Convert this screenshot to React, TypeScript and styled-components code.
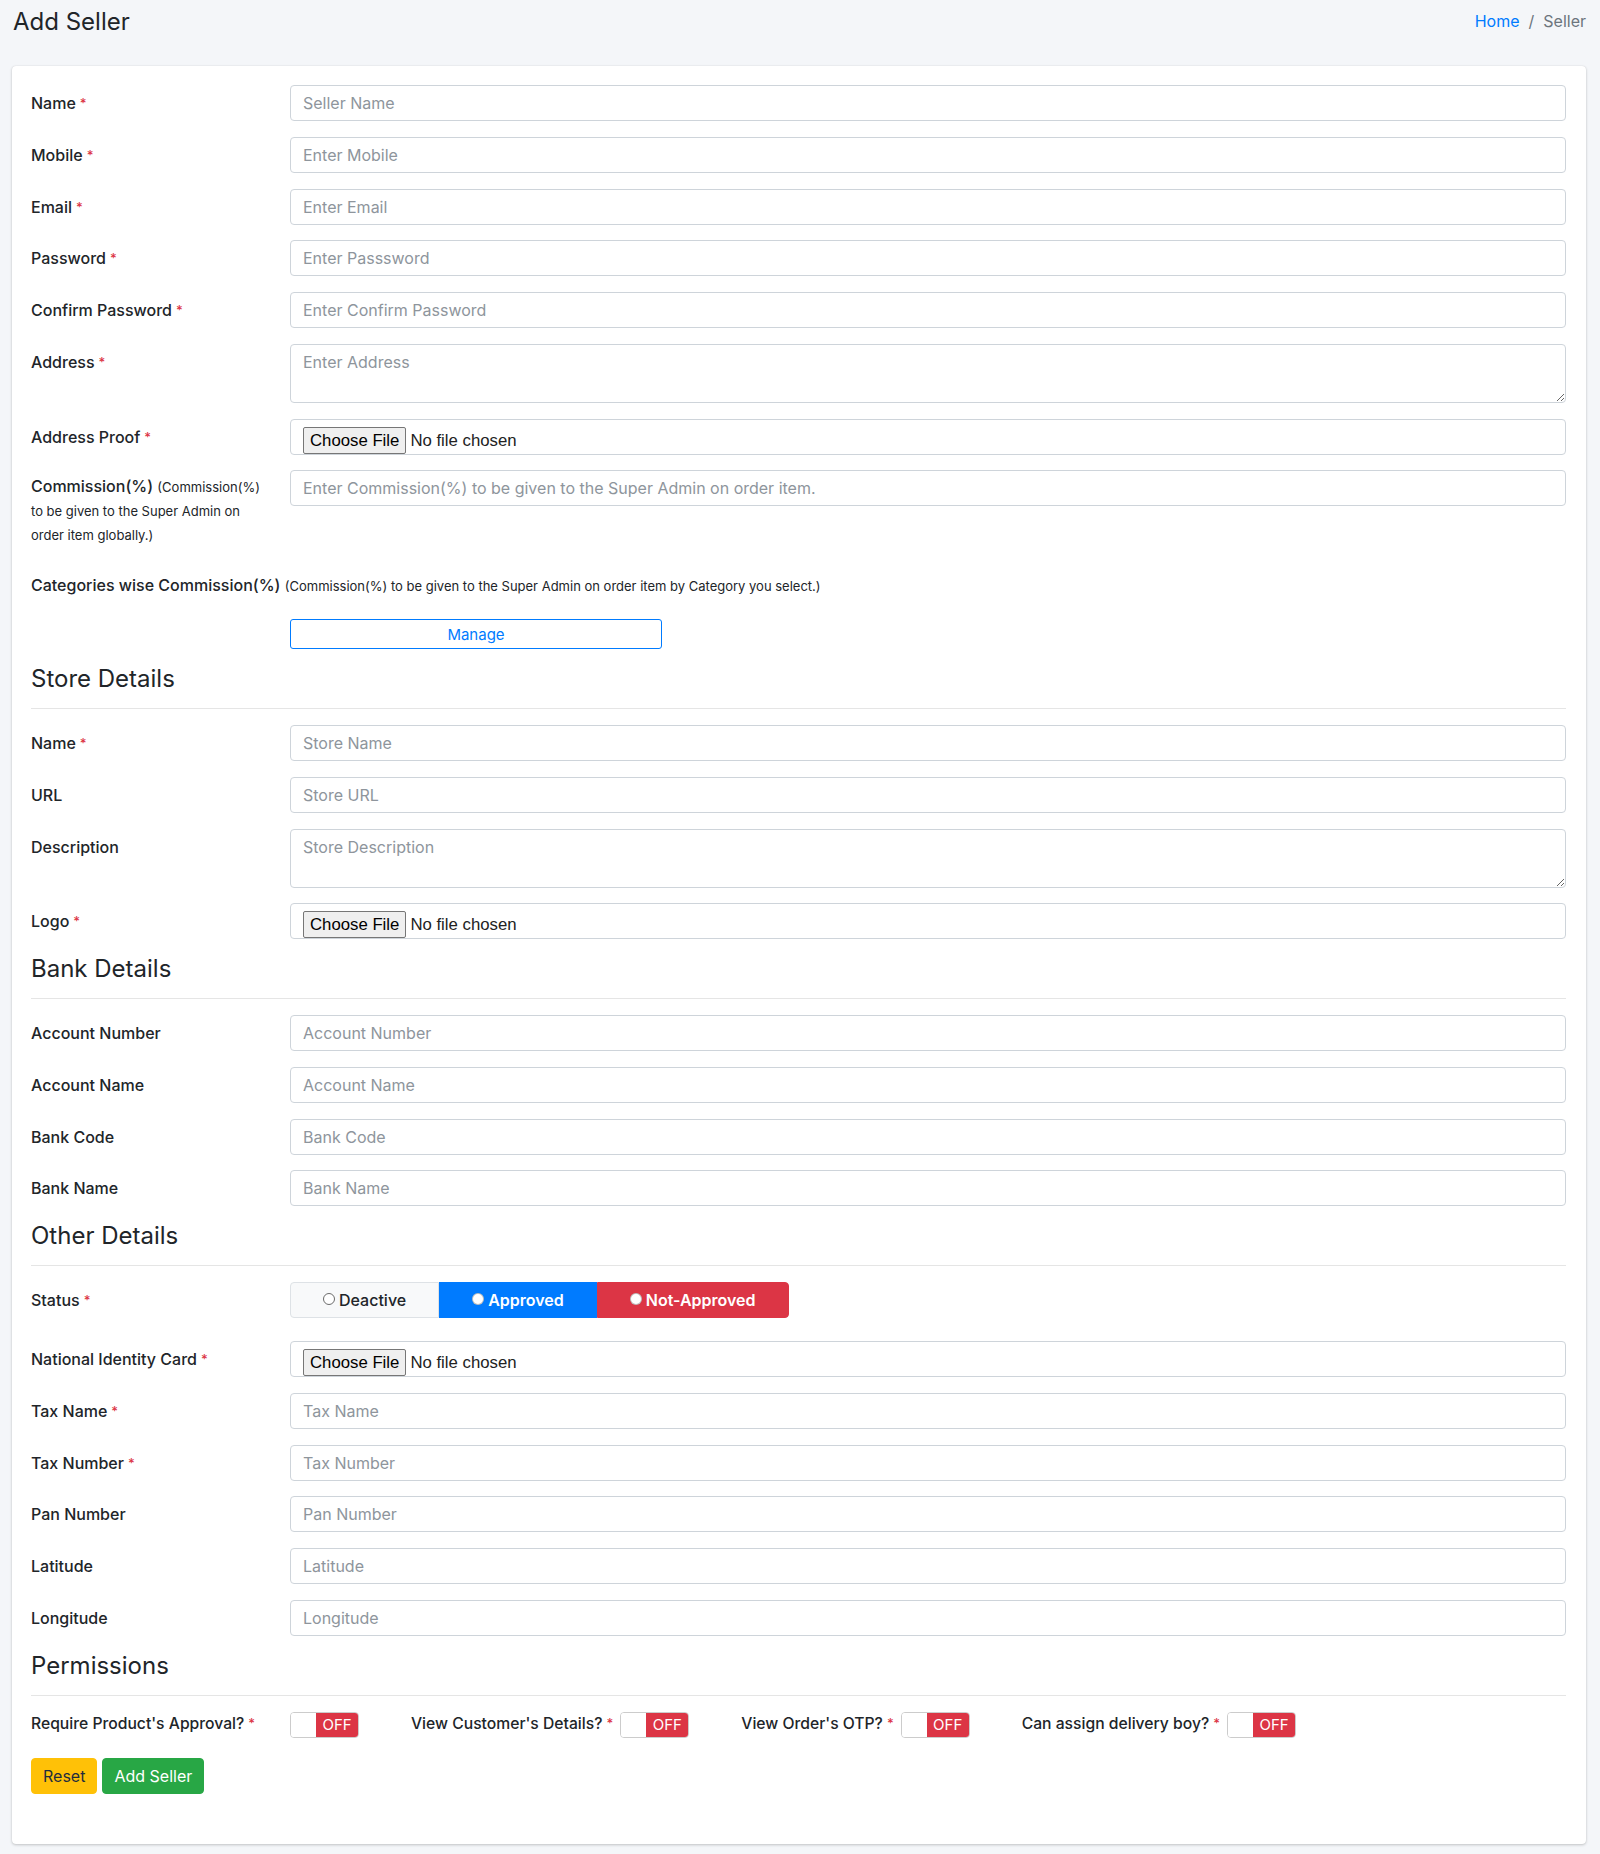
import React from 'react';
import styled, { createGlobalStyle } from 'styled-components';

const GlobalStyle = createGlobalStyle`
  * { box-sizing: border-box; }
  html, body { margin: 0; background: #f4f6f9; }
  body {
    font-family: Inter, "Noto Sans", sans-serif;
    color: #212529;
    font-size: 16px;
  }
`;

const Page = styled.div`
  padding: 0 14px 11px 12px;
`;

const Header = styled.header`
  display: flex;
  justify-content: space-between;
  align-items: center;
  height: 42px;
  margin-bottom: 24px;
`;

const Title = styled.h1`
  margin: 0;
  padding-left: 1px;
  font-size: 24px;
  font-weight: 400;
  color: #212529;
`;

const Breadcrumb = styled.nav`
  display: flex;
  gap: 9px;
  font-size: 16px;
  color: #6c757d;
`;

const Crumb = styled.a`
  color: #007bff;
  text-decoration: none;
`;

const Card = styled.div`
  background: #fff;
  border-radius: 4px;
  box-shadow: 0 0 1px rgba(0, 0, 0, 0.125), 0 1px 3px rgba(0, 0, 0, 0.2);
  padding: 19px 20px 20px 19px;
`;

const FormRow = styled.div<{ $mb?: number }>`
  display: grid;
  grid-template-columns: 259px 1fr;
  margin-bottom: ${p => p.$mb ?? 15.75}px;
`;

const Label = styled.label`
  font-size: 16px;
  font-weight: 500;
  line-height: 24px;
  padding-top: 6px;
  white-space: nowrap;
`;

const Required = styled.span`
  color: #dc3545;
  font-size: 13px;
  line-height: 1;
  margin-left: 4px;
  vertical-align: 1px;
`;

const Input = styled.input`
  width: 100%;
  height: 36px;
  border: 1px solid #ced4da;
  border-radius: 4px;
  padding: 6px 12px;
  font-family: inherit;
  font-size: 16px;
  color: #495057;
  &::placeholder { color: #8e959c; }
`;

const TextArea = styled.textarea`
  width: 100%;
  height: 59px;
  border: 1px solid #ced4da;
  border-radius: 4px;
  padding: 6px 12px;
  font-family: inherit;
  font-size: 16px;
  line-height: 22px;
  resize: vertical;
  display: block;
  &::placeholder { color: #8e959c; }
`;

const FileControl = styled.div`
  height: 36px;
  border: 1px solid #ced4da;
  border-radius: 4px;
  padding: 0 12px;
  display: flex;
  align-items: flex-end;
  font-family: "Liberation Sans", Arial, sans-serif;
  font-size: 16.75px;
  overflow: hidden;
`;

const FileButton = styled.span`
  height: 27px;
  line-height: 25px;
  padding: 0 6px;
  background: #efefef;
  border: 1px solid #767676;
  border-radius: 2px;
  color: #000;
`;

const FileText = styled.span`
  line-height: 27px;
  margin-left: 4px;
  color: #222;
`;

const LabelBlock = styled.div<{ $pb?: number }>`
  font-size: 16px;
  font-weight: 500;
  line-height: 24px;
  padding: 4px 0 ${p => p.$pb ?? 0}px;
  white-space: nowrap;
`;

const Big = styled.span`
  font-size: 16px;
  font-weight: 500;
  line-height: 1;
`;

const Note = styled.span`
  font-size: 13px;
  font-weight: 400;
  line-height: 1;
`;

const CategoryRow = styled.div`
  margin-bottom: 22px;
`;

const ManageRow = styled.div`
  padding-left: 259px;
  margin-bottom: 16px;
`;

const OutlineButton = styled.button`
  display: block;
  width: 372px;
  height: 30px;
  border: 1px solid #007bff;
  border-radius: 3px;
  background: #fff;
  color: #007bff;
  font-family: inherit;
  font-size: 15px;
`;

const SectionTitle = styled.h4`
  margin: -1px 0 0;
  font-size: 24px;
  font-weight: 400;
  line-height: 29px;
`;

const Divider = styled.hr`
  border: 0;
  border-top: 1px solid rgba(0, 0, 0, 0.1);
  margin: 15px 0 16px;
`;

const StatusGroup = styled.div`
  display: flex;
  height: 36px;
`;

const StatusOption = styled.label<{ $variant: 'light' | 'primary' | 'danger' }>`
  display: flex;
  align-items: center;
  justify-content: center;
  gap: 4px;
  padding: 0 32px;
  font-size: 16px;
  font-weight: ${p => (p.$variant === 'light' ? 500 : 600)};
  border: 1px solid
    ${p => (p.$variant === 'light' ? '#dee2e6' : p.$variant === 'primary' ? '#007bff' : '#dc3545')};
  background: ${p => (p.$variant === 'light' ? '#f8f9fa' : p.$variant === 'primary' ? '#007bff' : '#dc3545')};
  color: ${p => (p.$variant === 'light' ? '#212529' : '#fff')};
  &:first-child { border-radius: 4px 0 0 4px; }
  &:last-child { border-radius: 0 4px 4px 0; }
`;

const RadioDot = styled.span<{ $checked?: boolean }>`
  width: 12px;
  height: 12px;
  border-radius: 50%;
  background: #fff;
  border: 1px solid ${p => (p.$checked ? 'rgba(0,0,0,.25)' : '#6b6b6b')};
  margin-top: -3px;
`;

const PermissionsRow = styled.div`
  display: flex;
  align-items: center;
  height: 26px;
  margin-bottom: 20px;
`;

const PermLabel = styled.span<{ $width?: number }>`
  font-size: 15.7px;
  font-weight: 500;
  line-height: 24px;
  margin-top: -2px;
  white-space: nowrap;
  width: ${p => (p.$width ? `${p.$width}px` : 'auto')};
  margin-right: ${p => (p.$width ? 0 : 7)}px;
  flex-shrink: 0;
`;

const Toggle = styled.span`
  display: flex;
  width: 69px;
  height: 26px;
  border: 1px solid #ccc;
  border-radius: 4px;
  overflow: hidden;
  margin-right: 52px;
  flex-shrink: 0;
`;

const ToggleHandle = styled.span`
  width: 25px;
  background: #fff;
`;

const ToggleOff = styled.span`
  flex: 1;
  background: #dc3545;
  color: #fff;
  font-size: 15px;
  display: flex;
  align-items: center;
  justify-content: center;
`;

const Actions = styled.div`
  display: flex;
  gap: 5px;
  margin-bottom: 30px;
`;

const ActionButton = styled.button<{ $variant: 'warning' | 'success' }>`
  height: 36px;
  padding: 0 11px;
  border: 1px solid ${p => (p.$variant === 'warning' ? '#ffc107' : '#28a745')};
  border-radius: 4px;
  background: ${p => (p.$variant === 'warning' ? '#ffc107' : '#28a745')};
  color: ${p => (p.$variant === 'warning' ? '#1f2d3d' : '#fff')};
  font-family: inherit;
  font-size: 16px;
`;

type Field = { label: string; placeholder: string; required?: boolean; kind?: 'text' | 'area' | 'file' };

const sellerFields: Field[] = [
  { label: 'Name', placeholder: 'Seller Name', required: true },
  { label: 'Mobile', placeholder: 'Enter Mobile', required: true },
  { label: 'Email', placeholder: 'Enter Email', required: true },
  { label: 'Password', placeholder: 'Enter Passsword', required: true },
  { label: 'Confirm Password', placeholder: 'Enter Confirm Password', required: true },
  { label: 'Address', placeholder: 'Enter Address', required: true, kind: 'area' },
  { label: 'Address Proof', placeholder: '', required: true, kind: 'file' },
];

const storeFields: Field[] = [
  { label: 'Name', placeholder: 'Store Name', required: true },
  { label: 'URL', placeholder: 'Store URL' },
  { label: 'Description', placeholder: 'Store Description', kind: 'area' },
  { label: 'Logo', placeholder: '', required: true, kind: 'file' },
];

const bankFields: Field[] = [
  { label: 'Account Number', placeholder: 'Account Number' },
  { label: 'Account Name', placeholder: 'Account Name' },
  { label: 'Bank Code', placeholder: 'Bank Code' },
  { label: 'Bank Name', placeholder: 'Bank Name' },
];

const otherFields: Field[] = [
  { label: 'National Identity Card', placeholder: '', required: true, kind: 'file' },
  { label: 'Tax Name', placeholder: 'Tax Name', required: true },
  { label: 'Tax Number', placeholder: 'Tax Number', required: true },
  { label: 'Pan Number', placeholder: 'Pan Number' },
  { label: 'Latitude', placeholder: 'Latitude' },
  { label: 'Longitude', placeholder: 'Longitude' },
];

const permissions = [
  "Require Product's Approval?",
  "View Customer's Details?",
  "View Order's OTP?",
  'Can assign delivery boy?',
];

const FieldRow: React.FC<{ field: Field }> = ({ field }) => (
  <FormRow>
    <Label>
      {field.label}
      {field.required && <Required>*</Required>}
    </Label>
    {field.kind === 'area' ? (
      <TextArea placeholder={field.placeholder} />
    ) : field.kind === 'file' ? (
      <FileControl>
        <FileButton>Choose File</FileButton>
        <FileText>No file chosen</FileText>
      </FileControl>
    ) : (
      <Input type="text" placeholder={field.placeholder} />
    )}
  </FormRow>
);

const Section: React.FC<{ title: string }> = ({ title }) => (
  <>
    <SectionTitle>{title}</SectionTitle>
    <Divider />
  </>
);

const App: React.FC = () => (
  <Page>
    <GlobalStyle />
    <Header>
      <Title>Add Seller</Title>
      <Breadcrumb>
        <Crumb href="#">Home</Crumb>
        <span>/</span>
        <span>Seller</span>
      </Breadcrumb>
    </Header>

    <Card>
      {sellerFields.map(f => (
        <FieldRow key={f.label} field={f} />
      ))}

      <FormRow>
        <LabelBlock $pb={7}>
          <Big>Commission(%)</Big> <Note>(Commission(%)</Note>
          <br />
          <Note>to be given to the Super Admin on</Note>
          <br />
          <Note>order item globally.)</Note>
        </LabelBlock>
        <Input type="text" placeholder="Enter Commission(%) to be given to the Super Admin on order item." />
      </FormRow>

      <CategoryRow>
        <LabelBlock>
          <Big>Categories wise Commission(%)</Big>{' '}
          <Note>(Commission(%) to be given to the Super Admin on order item by Category you select.)</Note>
        </LabelBlock>
      </CategoryRow>

      <ManageRow>
        <OutlineButton type="button">Manage</OutlineButton>
      </ManageRow>

      <Section title="Store Details" />
      {storeFields.map(f => (
        <FieldRow key={f.label} field={f} />
      ))}

      <Section title="Bank Details" />
      {bankFields.map(f => (
        <FieldRow key={f.label} field={f} />
      ))}

      <Section title="Other Details" />
      <FormRow $mb={23}>
        <Label>
          Status<Required>*</Required>
        </Label>
        <StatusGroup>
          <StatusOption $variant="light">
            <RadioDot /> Deactive
          </StatusOption>
          <StatusOption $variant="primary">
            <RadioDot $checked /> Approved
          </StatusOption>
          <StatusOption $variant="danger">
            <RadioDot $checked /> Not-Approved
          </StatusOption>
        </StatusGroup>
      </FormRow>
      {otherFields.map(f => (
        <FieldRow key={f.label} field={f} />
      ))}

      <Section title="Permissions" />
      <PermissionsRow>
        {permissions.map((p, i) => (
          <React.Fragment key={p}>
            <PermLabel $width={i === 0 ? 259 : undefined}>
              {p}
              <Required>*</Required>
            </PermLabel>
            <Toggle>
              <ToggleHandle />
              <ToggleOff>OFF</ToggleOff>
            </Toggle>
          </React.Fragment>
        ))}
      </PermissionsRow>

      <Actions>
        <ActionButton $variant="warning" type="reset">
          Reset
        </ActionButton>
        <ActionButton $variant="success" type="submit">
          Add Seller
        </ActionButton>
      </Actions>
    </Card>
  </Page>
);

export default App;
